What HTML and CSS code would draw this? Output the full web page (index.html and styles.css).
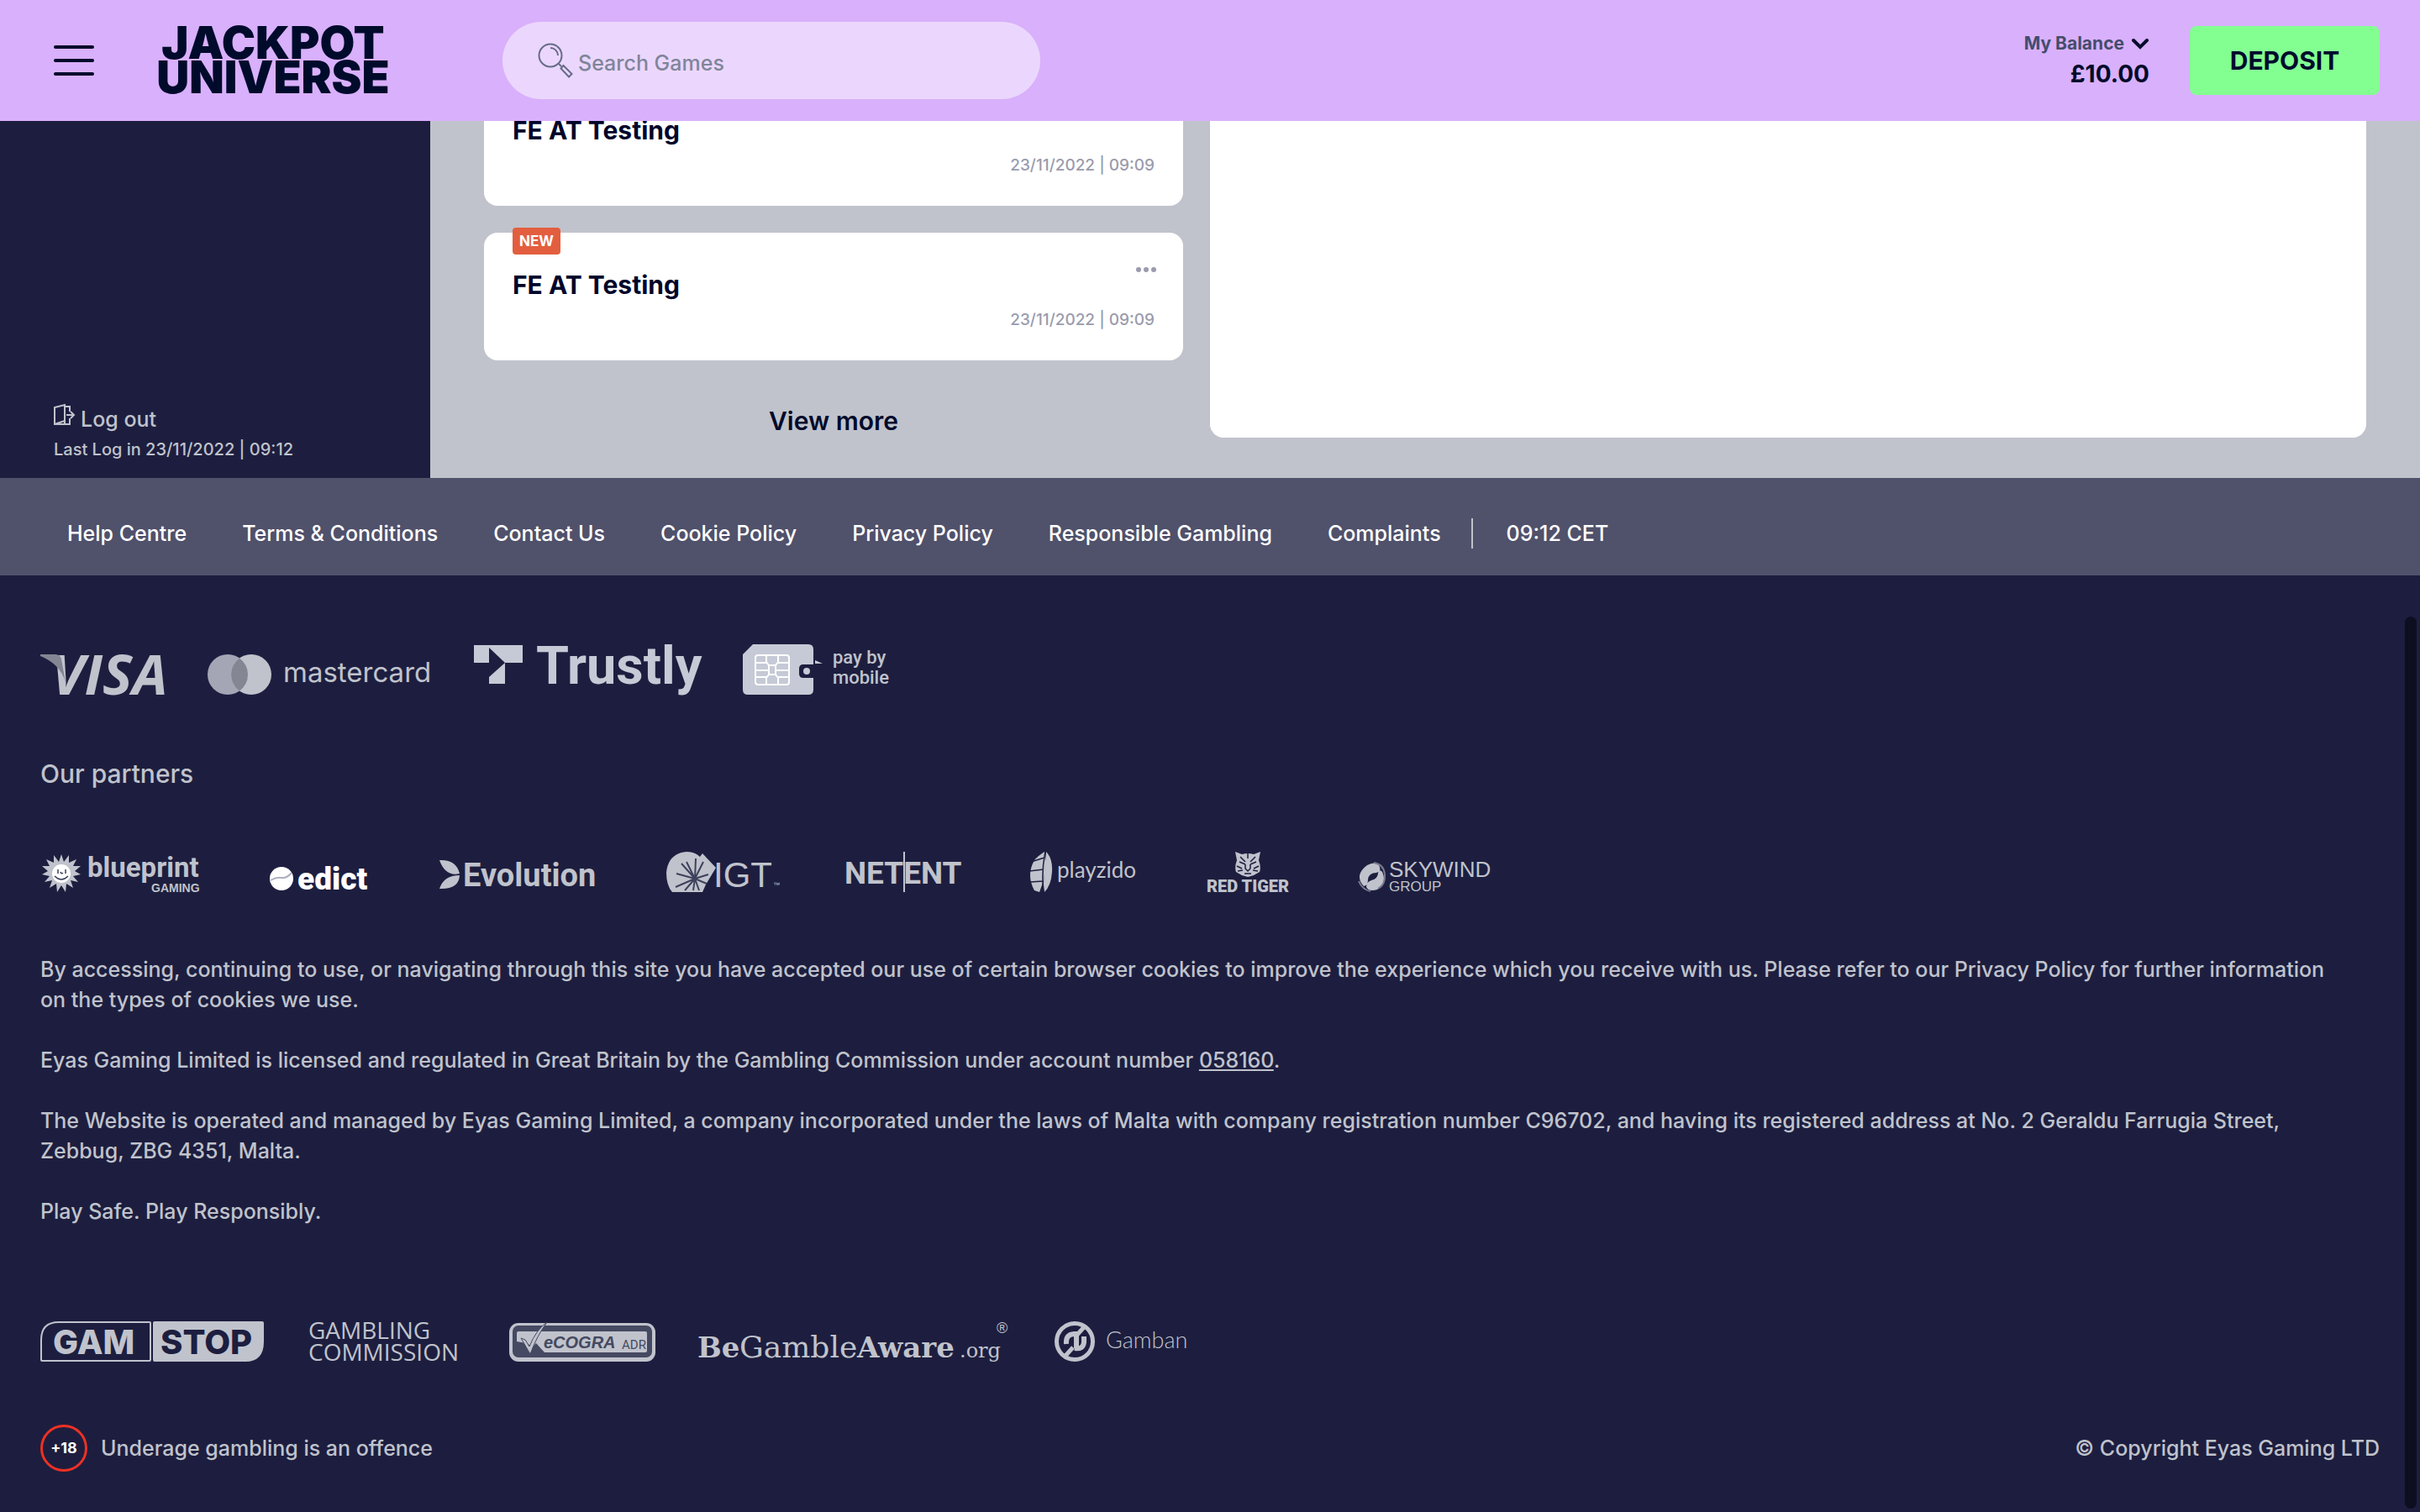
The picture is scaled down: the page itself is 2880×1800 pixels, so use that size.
FILE: index.html
```html
<!DOCTYPE html>
<html lang="en">
<head>
<meta charset="utf-8">
<meta name="viewport" content="width=device-width, initial-scale=1">
<title>Jackpot Universe</title>
<link rel="stylesheet" href="styles.css">
</head>
<body>
<header class="topbar">
  <button class="menu" type="button" aria-label="Menu"><span></span><span></span><span></span></button>
  <a class="brand" href="#"><svg width="298" height="80" viewBox="0 0 298 80" role="img" aria-label="Jackpot Universe">
    <text x="149" y="38">JACKPOT</text><text x="149" y="79">UNIVERSE</text>
  </svg></a>
  <label class="search">
    <svg width="42" height="42" viewBox="0 0 42 42" fill="none" stroke="currentColor" stroke-width="2"><circle cx="15" cy="15" r="13.500"/><path d="M15 6a9 9 0 0 1 9 9M25 25l3 3M27.500 30.500l3-3.500 10 10-3.500 3.500z"/></svg>
    <input type="search" placeholder="Search Games" aria-label="Search Games">
  </label>
  <div class="balance">
    <button class="balance-toggle" type="button">My Balance<svg width="22" height="14" viewBox="0 0 22 14" fill="none" stroke="#000b2b" stroke-width="4" stroke-linecap="round"><path d="M3 3l8 8 8-8"/></svg></button>
    <strong>£10.00</strong>
  </div>
  <button class="deposit" type="button">DEPOSIT</button>
</header>

<main class="account">
  <aside class="sidebar">
    <a class="logout" href="#"><svg width="26" height="26" viewBox="0 0 26 26" fill="none" stroke="currentColor" stroke-width="2"><path d="M13 24V1L1 4v20h18v-7M13 3h6v6M1 24l12-4M15 13h9M20 9l4 4-4 4"/></svg>Log out</a>
    <p>Last Log in 23/11/2022 | 09:12</p>
  </aside>
  <section class="inbox">
    <article class="message">
      <h2>FE AT Testing</h2>
      <time>23/11/2022 | 09:09</time>
    </article>
    <article class="message">
      <span class="badge">NEW</span>
      <button class="more" type="button" aria-label="Message options"><svg width="24" height="6" viewBox="0 0 24 6" fill="currentColor"><circle cx="3" cy="3" r="3"/><circle cx="12" cy="3" r="3"/><circle cx="21" cy="3" r="3"/></svg></button>
      <h2>FE AT Testing</h2>
      <time>23/11/2022 | 09:09</time>
    </article>
    <button class="view-more" type="button">View more</button>
  </section>
  <section class="reader" aria-label="Message"></section>
</main>

<nav class="links">
  <a href="#">Help Centre</a><a href="#">Terms &amp; Conditions</a><a href="#">Contact Us</a><a href="#">Cookie Policy</a><a href="#">Privacy Policy</a><a href="#">Responsible Gambling</a><a href="#">Complaints</a>
  <span class="clock">09:12 CET</span>
</nav>

<footer class="footer">
  <div class="payments">
    <svg class="visa" width="150" height="60" viewBox="0 0 150 60" role="img" aria-label="Visa"><text class="w-visa" x="13" y="60">VISA</text><path fill="#858694" d="M0 12h18q6 0 7 6l5 27Q23 23 0 14z"/></svg>
    <svg class="mc" width="267" height="60" viewBox="0 0 267 60" role="img" aria-label="Mastercard"><circle cx="24" cy="36" r="24" fill="#a5a6b5"/><circle cx="52" cy="36" r="24" fill="#c0c3cc"/><path fill="#858694" d="M38 16.500a24 24 0 0 1 0 39a24 24 0 0 1 0-39z"/><text class="w-mc" x="90" y="45">mastercard</text></svg>
    <svg class="trustly" width="272" height="60" viewBox="0 0 272 60" role="img" aria-label="Trustly"><path fill="#c5cad6" d="M0 1h58v21H37L18 4v18H0zM37 22v25H18V39z"/><text class="w-trustly" x="74" y="47">Trustly</text></svg>
    <svg class="pbm" width="176" height="60" viewBox="0 0 176 60" role="img" aria-label="Pay by mobile"><path fill="#c5cad6" d="M12 0h66q6 0 6 6v18H72q-5 0-5 5v6q0 5 5 5h12v14q0 6-6 6H6q-6 0-6-6V12zM86 19l9 4h-9z"/><circle cx="76" cy="32" r="4" fill="#c5cad6"/><path fill="none" stroke="#fff" stroke-width="2" d="M18 13h34q3 0 3 3v29q0 3-3 3H18q-3 0-3-3V16q0-3 3-3zM28 13v8l3 4v11l-3 4v8M42 13v8l-3 4v11l3 4v8M15 22h13M42 22h13M15 39h13M42 39h13M15 31h16M39 31h16M31 25h8M31 36h8"/><text class="w-pbm" x="107" y="23">pay by</text><text class="w-pbm" x="107" y="47">mobile</text></svg>
  </div>

  <h2 class="partners-title">Our partners</h2>
  <div class="partners">
    <svg width="193" height="48" viewBox="0 0 193 48" role="img" aria-label="Blueprint Gaming"><path fill="#c0c3cc" d="M25 3l3 9 6-8v9l9-4-4 8 9 0-7 6 7 4-9 2 6 7-9-2 3 9-8-5-1 10-5-8-5 8-1-10-8 5 3-9-9 2 6-7-9-2 7-4-7-6h9l-4-8 9 4V4l6 8z"/><circle cx="25" cy="26" r="11" fill="#fff"/><path fill="none" stroke="#3d405b" stroke-width="1.500" d="M17 29q8 8 16 0M21 21v5M30 21v5M24 24q1 3 3 1"/><text class="w-blueprint" x="56" y="30">blueprint</text><text class="w-gaming" x="132" y="48">GAMING</text></svg>
    <svg width="121" height="48" viewBox="0 0 121 48" role="img" aria-label="Edict"><circle cx="14" cy="32" r="14" fill="#fff"/><path fill="none" stroke="#aeb0c0" stroke-width="2" d="M1 34q7-4 13-3t12-6"/><text class="w-edict" x="33" y="45">edict</text></svg>
    <svg width="191" height="48" viewBox="0 0 191 48" role="img" aria-label="Evolution"><path fill="#c0c3cc" d="M1 10q20-1 24 16Q8 30 1 10zM25 28q-1 17-24 16 5-16 24-16z"/><text class="w-evolution" x="29" y="41">Evolution</text></svg>
    <svg width="133" height="48" viewBox="0 0 133 48" role="img" aria-label="IGT"><path fill="#c0c3cc" d="M7 48Q0 40 0 25 2 2 24 0q10 0 16 6l3-4 16 17-12 20-4 9z"/><path fill="none" stroke="#3e425c" stroke-width="2" d="M34 32L35 8M34 32L44 12M34 32L12 26M34 32L18 14M34 32L11 42M34 32L22 46M34 32l-2 14M34 32l5 14M34 32l14 6M34 32l16-5M34 32L24 12"/><text class="w-igt" x="56" y="42">IGT</text><text class="w-tm" x="127" y="42">™</text></svg>
    <svg width="139" height="48" viewBox="0 0 139 48" role="img" aria-label="NetEnt"><text class="w-netent" x="-1" y="38">NETENT</text><path d="M70 0v48" stroke="#c0c3cc" stroke-width="2"/></svg>
    <svg width="131" height="48" viewBox="0 0 131 48" role="img" aria-label="Playzido"><path fill="#c0c3cc" d="M18 0q-9 6-12 10-10 18 0 36l6 2q10-24 6-48z"/><path fill="#c0c3cc" d="M20 0q8 8 7 24t-9 24q-2-8 0-24z"/><path fill="none" stroke="#1d1e3f" stroke-width="1.500" d="M19 0q-5 24-2 48M2 12l16-5M0 23l17-2M1 36l15-1"/><text class="w-playzido" x="33" y="31">playzido</text></svg>
    <svg width="99" height="48" viewBox="0 0 99 48" role="img" aria-label="Red Tiger"><path fill="#c0c3cc" d="M34 0l8 3q7-2 14 0l8-3-2 10q3 8 1 14l-7 4-7 2-7-2-7-4q-2-6 1-14z"/><path fill="none" stroke="#1d1e3f" stroke-width="1.500" d="M40 6l6 6M58 6l-6 6M49 2v6M39 12l7 3M59 12l-7 3M46 15v5l3 3 3-3v-5M36 17l6 3M62 17l-6 3M37 23l6-1M61 23l-6-1M45 26h8"/><text class="w-tiger" x="0" y="48">RED TIGER</text></svg>
    <svg width="164" height="48" viewBox="0 0 164 48" role="img" aria-label="Skywind Group"><path fill="#c0c3cc" d="M12 16q9-5 14 0 4 7-3 9-9 0-10 8 0 7-5 8Q-4 28 12 16zM24 45q-10 3-13-3 0-6 6-8 8-2 8-9 2-5 5-1 6 13-6 21z"/><path fill="none" stroke="#777a8d" stroke-width="2" d="M20 13q12 2 13 14t-8 17M2 35q4 10 14 12"/><text class="w-sky" x="38" y="30">SKYWIND</text><text class="w-group" x="38" y="47">GROUP</text></svg>
  </div>

  <div class="legal">
    <p>By accessing, continuing to use, or navigating through this site you have accepted our use of certain browser cookies to improve the experience which you receive with us. Please refer to our Privacy Policy for further information on the types of cookies we use.</p>
    <p>Eyas Gaming Limited is licensed and regulated in Great Britain by the Gambling Commission under account number <a href="#">058160</a>.</p>
    <p>The Website is operated and managed by Eyas Gaming Limited, a company incorporated under the laws of Malta with company registration number C96702, and having its registered address at No. 2 Geraldu Farrugia Street, Zebbug, ZBG 4351, Malta.</p>
    <p>Play Safe. Play Responsibly.</p>
  </div>

  <div class="compliance">
    <svg width="270" height="48" viewBox="0 0 270 48" role="img" aria-label="Gamstop"><path fill="none" stroke="#c0c3cc" stroke-width="2" d="M22 1h108q1 0 1 1v44q0 1-1 1H2q-1 0-1-1V22Q1 1 22 1z"/><path fill="#c0c3cc" d="M136 0h128q2 0 2 2v22q0 24-22 24H136q-2 0-2-2V2q0-2 2-2z"/><text class="w-gam" x="15" y="39">GAM</text><text class="w-stop" x="143" y="39">STOP</text></svg>
    <svg width="188" height="48" viewBox="0 0 188 48" role="img" aria-label="Gambling Commission"><text class="w-gc" x="-1" y="21">GAMBLING</text><text class="w-gc" x="-1" y="47">COMMISSION</text></svg>
    <svg width="174" height="48" viewBox="0 0 174 48" role="img" aria-label="eCOGRA ADR"><rect y="2" width="174" height="46" rx="11" fill="#c0c3cc"/><rect x="4" y="5" width="166" height="38" rx="7" fill="#454961"/><rect x="9" y="12" width="155" height="25" rx="2" fill="#c0c3cc"/><path fill="#454961" d="M9 24l11 2 8 4 4-4 10 11H9z"/><path fill="#c0c3cc" stroke="#454961" d="M14 20l5 2 5 8Q32 10 45 1 33 17 25 39z"/><text class="w-ecogra" x="41" y="32">eCOGRA</text><text class="w-adr" x="134" y="33">ADR</text></svg>
    <svg width="375" height="48" viewBox="0 0 375 48" role="img" aria-label="BeGambleAware.org"><text class="w-bga strong" x="0" y="43">Be</text><text class="w-bga" x="50" y="43">Gamble</text><text class="w-bga strong" x="190" y="43">Aware</text><text class="w-org" x="312" y="43">.org</text><text class="w-reg" x="356" y="14">®</text></svg>
    <svg width="162" height="48" viewBox="0 0 162 48" role="img" aria-label="Gamban"><g fill="none" stroke="#c0c3cc"><circle cx="24" cy="24" r="21.500" stroke-width="5"/><path stroke-width="5" d="M35 7L26 17M22 31L13 41"/><path stroke-width="6" d="M14 27q-1-12 10-12h2v17M24 32q10 2 11-7v-7"/></g><text class="w-gamban" x="61" y="32">Gamban</text></svg>
  </div>

  <div class="bottom">
    <span class="age">+18</span><span>Underage gambling is an offence</span>
    <span class="copyright">© Copyright Eyas Gaming LTD</span>
  </div>
</footer>
<div class="scroll-thumb" aria-hidden="true"></div>
</body>
</html>
```
FILE: styles.css
```css
* { box-sizing: border-box; }
body {
  margin: 0;
  background: #1d1e3f;
  color: #c0c3cc;
  font: 500 25px/36px Inter, "Open Sans", sans-serif;
}
h2, p { margin: 0; }
a { color: inherit; text-decoration: none; }
button { margin: 0; padding: 0; border: 0; background: none; color: inherit; font: inherit; cursor: pointer; }
svg { display: block; flex: none; overflow: visible; }

.topbar {
  position: fixed;
  z-index: 2;
  top: 0;
  left: 0;
  right: 0;
  display: flex;
  align-items: center;
  height: 144px;
  padding: 0 48px 0 64px;
  background: #d9b0fb;
  color: #000b2b;
}
.menu { display: grid; gap: 12px; width: 48px; margin-right: 64px; }
.menu span { height: 4px; border-radius: 2px; background: #000b2b; }
.brand { margin-right: 124px; }
.brand text { font: 900 54px Inter, sans-serif; fill: #000b2b; text-anchor: middle; }
.search {
  display: flex;
  align-items: center;
  gap: 6px;
  width: 640px;
  height: 92px;
  padding: 0 42px;
  border-radius: 46px;
  background: #ebd7fd;
  color: #666b88;
}
.search input { flex: 1; min-width: 0; padding: 6px 0 0; border: 0; outline: 0; background: none; color: #666b80; font: inherit; }
.search input::placeholder { color: #80859a; opacity: 1; }
.balance { display: flex; flex-direction: column; align-items: flex-end; margin-left: auto; margin-right: 48px; padding-bottom: 4px; }
.balance-toggle { display: flex; align-items: center; gap: 8px; color: #444d6b; font-size: 21px; font-weight: 700; }
.balance strong { font-size: 28px; }
.deposit { width: 226px; height: 82px; border-radius: 8px; background: #83ff92; font-size: 30px; font-weight: 700; }

.account {
  display: grid;
  grid-template-columns: 512px 832px 1fr;
  padding-top: 93px;
  background: linear-gradient(90deg, #1d1e3f 512px, #c0c3cc 512px);
}
.sidebar {
  display: flex;
  flex-direction: column;
  justify-content: flex-end;
  padding: 0 64px 16px;
}
.logout { display: flex; gap: 6px; }
.sidebar p { font-size: 20px; }
.inbox { display: grid; gap: 32px; margin: 0 -64px 0 64px; padding-bottom: 48px; color: #00052b; }
.message {
  position: relative;
  display: flex;
  flex-direction: column;
  height: 152px;
  padding: 44px 34px 0;
  border-radius: 16px;
  background: #fff;
}
.message h2 { font-size: 30px; font-weight: 700; }
.message time { align-self: flex-end; margin-top: 8px; color: #9a9bad; font-size: 19px; line-height: 32px; }
.badge {
  position: absolute;
  top: -6px;
  left: 34px;
  padding: 0 8px;
  border-radius: 4px;
  background: #e35e3f;
  color: #fff;
  font-size: 17px;
  font-weight: 700;
  line-height: 32px;
}
.more { position: absolute; top: 41px; right: 32px; color: #9a9bad; }
.view-more { justify-self: center; margin-top: 20px; color: #000b2b; font-size: 30px; font-weight: 600; line-height: 40px; }
.reader { margin: 0 64px 48px 96px; border-radius: 16px; background: #fff; }

.links {
  display: flex;
  align-items: center;
  gap: 66px;
  height: 116px;
  padding: 16px 80px 0;
  background: #50516b;
  color: #fff;
}
.clock { margin-left: -30px; padding-left: 40px; border-left: 2px solid #c0c3cc; }

.footer { padding: 82px 48px 46px; }
.payments { display: flex; align-items: center; height: 60px; }
.visa { margin-right: 49px; }
.mc { margin-right: 50px; }
.trustly { margin-right: 48px; }
.partners-title { margin-top: 76px; font-size: 30px; font-weight: 500; }
.partners { display: flex; gap: 80px; margin-top: 75px; }
.legal { display: grid; gap: 36px; margin-top: 74px; padding-right: 40px; }
.legal a { text-decoration: underline; }
.compliance { display: flex; gap: 50px; margin-top: 113px; }
.bottom { display: flex; align-items: center; gap: 16px; margin-top: 75px; }
.age {
  width: 56px;
  height: 56px;
  border: 3px solid #ee3124;
  border-radius: 50%;
  color: #fff;
  font-size: 18px;
  font-weight: 700;
  line-height: 50px;
  text-align: center;
}
.copyright { margin-left: auto; }
.scroll-thumb { position: absolute; top: 734px; right: 4px; bottom: 4px; width: 14px; border-radius: 7px; background: #0d0e20; }

/* Wordmarks in the logo strips */
.footer text { fill: #c0c3cc; }
.w-visa { font: italic 700 67px "Open Sans", sans-serif; }
.w-mc { font: 400 33px Inter, sans-serif; }
.footer .w-trustly { font: 700 63px Roboto, sans-serif; fill: #c5cad6; }
.w-pbm { font: 500 22px Roboto, sans-serif; }
.w-blueprint { font: 700 33px Roboto, sans-serif; }
.w-gaming { font: 700 14px "Liberation Sans", sans-serif; }
.footer .w-edict { font: 900 37px Roboto, sans-serif; fill: #fff; }
.w-evolution { font: 700 38px Roboto, sans-serif; }
.w-igt { font: 400 42px "Liberation Sans", sans-serif; }
.w-tm { font: 400 8px "Liberation Sans", sans-serif; }
.w-netent { font: 700 37px Roboto, sans-serif; }
.w-playzido { font: 400 26px Lato, sans-serif; }
.w-tiger { font: 900 20px Roboto, sans-serif; }
.w-sky { font: 400 26px "Liberation Sans", sans-serif; }
.w-group { font: 400 17px "Liberation Sans", sans-serif; }
.w-gam { font: 800 40px Inter, sans-serif; }
.footer .w-stop { font: 800 40px Inter, sans-serif; fill: #1d1e3f; }
.w-gc { font: 500 28px "Open Sans", sans-serif; }
.footer .w-ecogra { font: italic 700 20px "Liberation Sans", sans-serif; fill: #454961; }
.footer .w-adr { font: 400 15px Roboto, sans-serif; fill: #454961; }
.w-bga { font: 400 36px "DejaVu Serif", serif; }
.w-bga.strong { font-weight: 700; font-size: 34px; }
.w-org { font: 400 24px "DejaVu Serif", serif; }
.w-reg { font: 400 18px "Liberation Sans", sans-serif; }
.w-gamban { font: 300 27px Lato, sans-serif; }
```
